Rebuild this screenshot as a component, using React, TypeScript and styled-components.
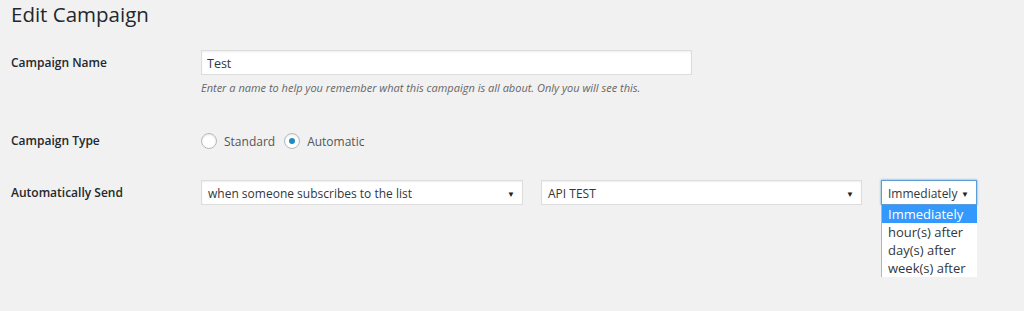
import React from 'react';
import styled, { createGlobalStyle } from 'styled-components';

const GlobalStyle = createGlobalStyle`
  html, body {
    margin: 0;
    padding: 0;
    background: #f1f1f1;
  }
  body {
    font-family: "Open Sans", "Noto Sans", sans-serif;
    color: #23282d;
    font-size: 12px;
  }
`;

const Page = styled.div`
  padding: 0 10px;
  height: 311px;
  box-sizing: border-box;
`;

const Title = styled.h1`
  margin: 0;
  padding-left: 1px;
  font-size: 20.5px;
  font-weight: 400;
  line-height: 29px;
  color: #23282d;
`;

const Row = styled.div<{ $top: number }>`
  display: grid;
  grid-template-columns: 191px 1fr;
  align-items: start;
  margin-top: ${(p) => p.$top}px;
`;

const Label = styled.div<{ $lh: number }>`
  padding: 1px 0 0 1px;
  font-size: 12px;
  font-weight: 600;
  line-height: ${(p) => p.$lh}px;
  color: #23282d;
`;

const Field = styled.div`
  display: flex;
  flex-direction: column;
`;

const TextInput = styled.input`
  box-sizing: border-box;
  width: 491px;
  height: 25px;
  margin: 0;
  padding: 1px 5px 0;
  border: 1px solid #ddd;
  background: #fff;
  box-shadow: inset 0 1px 2px rgba(0, 0, 0, 0.07);
  font-family: inherit;
  font-size: 12.5px;
  color: #32373c;
  outline: none;
`;

const Description = styled.p`
  margin: 4px 0 0;
  font-size: 11px;
  line-height: 18px;
  font-style: italic;
  color: #666;
`;

const RadioGroup = styled.div`
  display: flex;
  align-items: center;
  height: 20px;
  padding-top: 1px;
`;

const RadioOption = styled.label`
  display: flex;
  align-items: center;
  gap: 7px;
  margin-right: 9px;
  font-size: 12px;
  color: #555;
`;

const RadioCircle = styled.span<{ $checked?: boolean }>`
  box-sizing: border-box;
  width: 16px;
  height: 16px;
  border-radius: 50%;
  border: 1px solid #b4b9be;
  background: #fff;
  box-shadow: inset 0 1px 2px rgba(0, 0, 0, 0.1);
  display: flex;
  align-items: center;
  justify-content: center;

  &::after {
    content: '';
    display: ${(p) => (p.$checked ? 'block' : 'none')};
    width: 6px;
    height: 6px;
    border-radius: 50%;
    background: #1e8cbe;
  }
`;

const SelectRow = styled.div`
  display: flex;
  align-items: flex-start;
`;

const SelectWrap = styled.div<{ $gap: number }>`
  position: relative;
  margin-right: ${(p) => p.$gap}px;
`;

const SelectBox = styled.div<{ $w: number; $focus?: boolean }>`
  box-sizing: border-box;
  width: ${(p) => p.$w}px;
  height: 25px;
  display: flex;
  align-items: center;
  justify-content: space-between;
  padding: 1px 7px 0 6px;
  background: #fff;
  border: 1px solid ${(p) => (p.$focus ? '#5b9dd9' : '#ddd')};
  box-shadow: ${(p) =>
    p.$focus ? '0 0 2px rgba(30, 140, 190, 0.8)' : 'inset 0 1px 2px rgba(0, 0, 0, 0.07)'};
  font-size: 12px;
  color: #32373c;
`;

const Arrow = styled.span`
  font-size: 8px;
  color: #222;
`;

const DropList = styled.ul`
  position: absolute;
  left: 0;
  top: 25px;
  width: 96px;
  margin: 0;
  padding: 0;
  list-style: none;
  background: #fff;
  border-left: 1px solid #a9b8c8;
  box-sizing: border-box;
  height: 72px;
  overflow: hidden;
`;

const DropItem = styled.li<{ $active?: boolean }>`
  height: 18px;
  line-height: 18px;
  padding-left: 6px;
  font-size: 13px;
  background: ${(p) => (p.$active ? '#3399ff' : 'transparent')};
  color: ${(p) => (p.$active ? '#fff' : '#32373c')};
`;

const delays = ['Immediately', 'hour(s) after', 'day(s) after', 'week(s) after'];

const App: React.FC = () => {
  return (
    <Page>
      <GlobalStyle />
      <Title>Edit Campaign</Title>

      <Row $top={21}>
        <Label $lh={24}>Campaign Name</Label>
        <Field>
          <TextInput defaultValue="Test" />
          <Description>
            Enter a name to help you remember what this campaign is all about. Only you will see this.
          </Description>
        </Field>
      </Row>

      <Row $top={33}>
        <Label $lh={20}>Campaign Type</Label>
        <RadioGroup>
          <RadioOption>
            <RadioCircle />
            Standard
          </RadioOption>
          <RadioOption>
            <RadioCircle $checked />
            Automatic
          </RadioOption>
        </RadioGroup>
      </Row>

      <Row $top={29}>
        <Label $lh={24}>Automatically Send</Label>
        <SelectRow>
          <SelectWrap $gap={18}>
            <SelectBox $w={322}>
              when someone subscribes to the list
              <Arrow>▼</Arrow>
            </SelectBox>
          </SelectWrap>
          <SelectWrap $gap={19}>
            <SelectBox $w={321}>
              API TEST
              <Arrow>▼</Arrow>
            </SelectBox>
          </SelectWrap>
          <SelectWrap $gap={0}>
            <SelectBox $w={96} $focus>
              Immediately
              <Arrow>▼</Arrow>
            </SelectBox>
            <DropList>
              {delays.map((d, i) => (
                <DropItem key={d} $active={i === 0}>
                  {d}
                </DropItem>
              ))}
            </DropList>
          </SelectWrap>
        </SelectRow>
      </Row>
    </Page>
  );
};

export default App;
